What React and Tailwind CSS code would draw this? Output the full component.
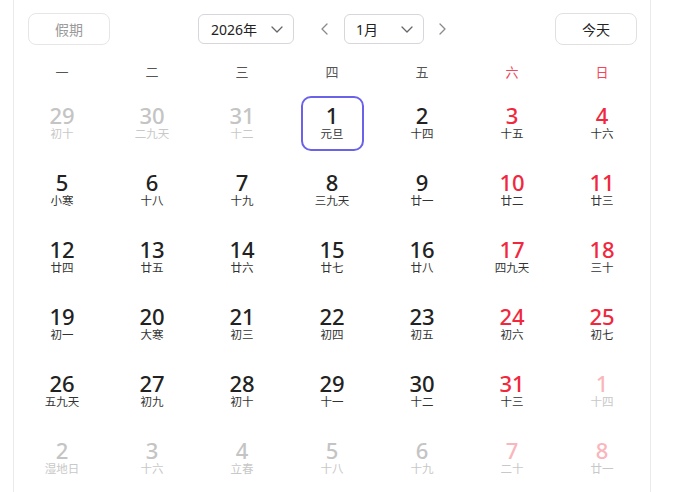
import React from "react";

const weekdays = ["一", "二", "三", "四", "五", "六", "日"];

// t: "p" prev/next month gray, "pr" faded red, "n" normal, "r" red, "s" selected
const rows = [
  [["29", "初十", "p"], ["30", "二九天", "p"], ["31", "十二", "p"], ["1", "元旦", "s"], ["2", "十四", "n"], ["3", "十五", "r"], ["4", "十六", "r"]],
  [["5", "小寒", "n"], ["6", "十八", "n"], ["7", "十九", "n"], ["8", "三九天", "n"], ["9", "廿一", "n"], ["10", "廿二", "r"], ["11", "廿三", "r"]],
  [["12", "廿四", "n"], ["13", "廿五", "n"], ["14", "廿六", "n"], ["15", "廿七", "n"], ["16", "廿八", "n"], ["17", "四九天", "r"], ["18", "三十", "r"]],
  [["19", "初一", "n"], ["20", "大寒", "n"], ["21", "初三", "n"], ["22", "初四", "n"], ["23", "初五", "n"], ["24", "初六", "r"], ["25", "初七", "r"]],
  [["26", "五九天", "n"], ["27", "初九", "n"], ["28", "初十", "n"], ["29", "十一", "n"], ["30", "十二", "n"], ["31", "十三", "r"], ["1", "十四", "pr"]],
  [["2", "湿地日", "p"], ["3", "十六", "p"], ["4", "立春", "p"], ["5", "十八", "p"], ["6", "十九", "p"], ["7", "二十", "pr"], ["8", "廿一", "pr"]],
];

function Chevron({ dir = "down", className = "" }) {
  const d =
    dir === "down"
      ? "M3 6 L8 11 L13 6"
      : dir === "left"
      ? "M10 3 L5 8 L10 13"
      : "M6 3 L11 8 L6 13";
  return (
    <svg viewBox="0 0 16 16" className={className} fill="none" stroke="currentColor" strokeWidth="1.3" strokeLinecap="round" strokeLinejoin="round">
      <path d={d} />
    </svg>
  );
}

function Cell({ num, lunar, t }) {
  const numColor =
    t === "p" ? "text-[#c4c4c4]" : t === "pr" ? "text-[#f9b6bc]" : t === "r" ? "text-[#f1283d]" : "text-[#222222]";
  const lunarColor = t === "p" || t === "pr" ? "text-[#c8c8c8]" : "text-[#333333]";
  const box =
    t === "s"
      ? "border-2 border-[#6a62e8] rounded-[10px]"
      : "border-2 border-transparent";
  return (
    <div className="flex h-[67px] items-center justify-center">
      <div className={`flex h-[55px] w-[63px] flex-col items-center pt-[6px] ${box}`}>
        <span className={`text-[22px] font-medium leading-[22px] ${numColor}`}>{num}</span>
        <span className={`mt-[1px] text-[11.5px] leading-[14px] ${lunarColor}`}>{lunar}</span>
      </div>
    </div>
  );
}

export default function App() {
  return (
    <div
      className="h-[492px] w-[699px] overflow-hidden bg-white pl-[13px]"
      style={{ fontFamily: '"Noto Sans", "Noto Sans CJK SC", sans-serif' }}
    >
      <div className="h-full w-[638px] border-x border-[#ebebeb] px-[3px]">
        {/* header */}
        <div className="flex h-[56px] items-start pt-[13px]">
          <button className="ml-[11px] flex h-[32px] w-[82px] items-center justify-center rounded-[8px] border border-[#e6e6e6] text-[14px] text-[#9a9a9a]">
            假期
          </button>
          <div className="ml-[88px] mt-[1px] flex h-[30px] w-[96px] items-center justify-between rounded-[6px] border border-[#d6d6dc] pl-[12px] pr-[8px] text-[14px] text-[#222]">
            <span>2026年</span>
            <Chevron className="h-[16px] w-[16px] text-[#666]" />
          </div>
          <div className="ml-[23px] mt-[1px] flex h-[30px] items-center">
            <Chevron dir="left" className="h-[16px] w-[16px] text-[#8a8a8a]" />
          </div>
          <div className="ml-[11px] mt-[1px] flex h-[30px] w-[80px] items-center justify-between rounded-[6px] border border-[#d6d6dc] pl-[11px] pr-[8px] text-[14px] text-[#222]">
            <span>1月</span>
            <Chevron className="h-[16px] w-[16px] text-[#666]" />
          </div>
          <div className="ml-[10px] mt-[1px] flex h-[30px] items-center">
            <Chevron dir="right" className="h-[16px] w-[16px] text-[#8a8a8a]" />
          </div>
          <button className="ml-auto mr-[10px] flex h-[32px] w-[82px] items-center justify-center rounded-[8px] border border-[#e0e0e0] text-[14px] text-[#222]">
            今天
          </button>
        </div>
        {/* weekdays */}
        <div className="grid h-[33px] grid-cols-7 items-center">
          {weekdays.map((w, i) => (
            <div
              key={w}
              className={`text-center text-[13px] ${i >= 5 ? "text-[#f5455a]" : "text-[#555555]"}`}
            >
              {w}
            </div>
          ))}
        </div>
        {/* days */}
        <div className="grid grid-cols-7 pt-[1px]">
          {rows.flat().map(([n, l, t], i) => (
            <Cell key={i} num={n} lunar={l} t={t} />
          ))}
        </div>
      </div>
    </div>
  );
}
